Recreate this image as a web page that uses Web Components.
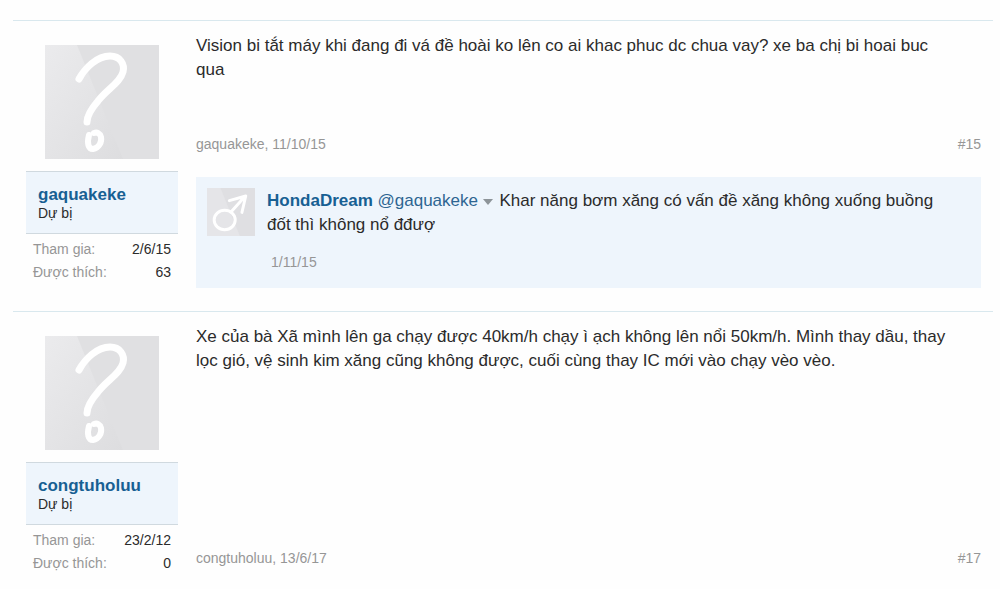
<!DOCTYPE html>
<html lang="vi">
<head>
<meta charset="utf-8">
<meta name="viewport" content="width=device-width, initial-scale=1">
<title>Vision bị tắt máy</title>
<style>
  body { margin: 0; background: #fefefe; color: #2b2b2b; font-family: "Liberation Sans", Arial, sans-serif; font-size: 17px; line-height: 24px; }
</style>
</head>
<body>
<forum-thread>
  <forum-post author="gaquakeke" rank="Dự bị" joined="2/6/15" likes="63" date="11/10/15" number="15">
    Vision bi tắt máy khi đang đi vá đề hoài ko lên co ai khac phuc dc chua vay? xe ba chị bi hoai buc qua
    <post-comment slot="comments" author="HondaDream" mention="gaquakeke" date="1/11/15">Khar năng bơm xăng có vấn đề xăng không xuống buồng đốt thì không nổ đđượ</post-comment>
  </forum-post>
  <forum-post author="congtuholuu" rank="Dự bị" joined="23/2/12" likes="0" date="13/6/17" number="17">
    Xe của bà Xã mình lên ga chạy được 40km/h chạy ì ạch không lên nổi 50km/h. Mình thay dầu, thay lọc gió, vệ sinh kim xăng cũng không được, cuối cùng thay IC mới vào chạy vèo vèo.
  </forum-post>
</forum-thread>
<script>
class ForumThread extends HTMLElement {
  connectedCallback() {
    this.attachShadow({ mode: 'open' }).innerHTML = `
      <style>:host { display: block; padding: 20px 7px 0 13px; }</style>
      <slot></slot>`;
  }
}

class UserAvatar extends HTMLElement {
  connectedCallback() {
    const male = this.getAttribute('kind') === 'male';
    const art = male
      ? `<rect width="114" height="114" fill="#dfdfe2"/>
         <path d="M0 0H32L78 114H0z" fill="#e5e5e8"/>
         <g fill="none" stroke="#fff" stroke-width="7" stroke-linecap="round" stroke-linejoin="round">
           <ellipse cx="42" cy="76" rx="25" ry="23"/><path d="M57 57L90 20M53 30L92 19L83 58"/>
         </g>`
      : `<defs><linearGradient id="g" x1="0" y1="0" x2="1" y2="1"><stop stop-color="#ebebed"/><stop offset="1" stop-color="#dddddf"/></linearGradient></defs>
         <rect width="114" height="114" fill="#e0e0e2"/>
         <path d="M0 0H32L78 114H0z" fill="url(#g)"/>
         <g fill="none" stroke="#fff" stroke-linecap="round" stroke-linejoin="round">
           <path stroke-width="7" d="M34 34C40 23 52 11 65 11C75 11 80 19 78 27C75 38 62 44 53 56C47 63 42 71 42 77"/>
           <path stroke-width="6" d="M44 90C42 98 43 104 48 104C54 103 57 97 56 92C55 88 52 87 49 88"/>
         </g>`;
    this.attachShadow({ mode: 'open' }).innerHTML = `
      <style>:host { display: block; } svg { display: block; width: 100%; height: 100%; }</style>
      <svg viewBox="0 0 114 114" aria-hidden="true">${art}</svg>`;
  }
}

class UserCard extends HTMLElement {
  connectedCallback() {
    const a = n => this.getAttribute(n);
    this.attachShadow({ mode: 'open' }).innerHTML = `
      <style>
        :host { display: block; padding-top: 12px; }
        user-avatar { width: 114px; height: 114px; margin: 0 auto 12px; }
        .name { background: #eef5fc; border: solid #d0d9df; border-width: 1px 0; padding: 12px; }
        a { display: block; color: #176093; font-size: 17px; line-height: 22px; font-weight: bold; text-decoration: none; }
        .rank { font-size: 14px; line-height: 15px; }
        dl { margin: 4px 7px 0; font-size: 14px; line-height: 23px; }
        dl div { display: flex; justify-content: space-between; }
        dt { color: #969696; }
        dd { margin: 0; }
      </style>
      <user-avatar></user-avatar>
      <div class="name"><a href="#">${a('name')}</a><div class="rank">${a('rank')}</div></div>
      <dl>
        <div><dt>Tham gia:</dt><dd>${a('joined')}</dd></div>
        <div><dt>Được thích:</dt><dd>${a('likes')}</dd></div>
      </dl>`;
  }
}

class PostComment extends HTMLElement {
  connectedCallback() {
    const a = n => this.getAttribute(n);
    this.attachShadow({ mode: 'open' }).innerHTML = `
      <style>
        :host { display: flex; gap: 12px; padding: 11px 28px 11px 11px; background: #eef5fc; }
        user-avatar { flex: none; width: 48px; height: 48px; }
        p { margin: 1px 0 15px; }
        a { color: #2d6592; text-decoration: none; }
        .author { color: #176093; font-weight: bold; }
        .arrow { display: inline-block; border: 5px solid transparent; border-top: 6px solid #8d9499; border-bottom: 0; vertical-align: middle; margin-right: 2px; }
        .date { margin: 0 4px 5px; color: #969696; font-size: 14px; line-height: 20px; }
      </style>
      <user-avatar kind="male"></user-avatar>
      <div>
        <p><a class="author" href="#">${a('author')}</a> <a href="#">@${a('mention')}</a> <span class="arrow"></span> <slot></slot></p>
        <div class="date">${a('date')}</div>
      </div>`;
  }
}

class ForumPost extends HTMLElement {
  connectedCallback() {
    const a = n => this.getAttribute(n);
    this.attachShadow({ mode: 'open' }).innerHTML = `
      <style>
        :host { display: grid; grid-template-columns: 152px 1fr; gap: 18px; border-top: 1px solid #d9e8ee; padding: 12px 12px 11px 13px; }
        main { display: flex; flex-direction: column; min-width: 0; padding: 1px 0 8px; }
        .message { min-height: 101px; padding-right: 28px; }
        footer { display: flex; justify-content: space-between; margin-top: auto; font-size: 14px; line-height: 18px; color: #969696; }
        a { color: inherit; text-decoration: none; }
        ::slotted(post-comment) { margin: 24px 0 4px; }
      </style>
      <user-card name="${a('author')}" rank="${a('rank')}" joined="${a('joined')}" likes="${a('likes')}"></user-card>
      <main>
        <div class="message"><slot></slot></div>
        <footer><span><a href="#">${a('author')}</a>, <a href="#">${a('date')}</a></span><a href="#">#${a('number')}</a></footer>
        <slot name="comments"></slot>
      </main>`;
  }
}

customElements.define('user-avatar', UserAvatar);
customElements.define('user-card', UserCard);
customElements.define('post-comment', PostComment);
customElements.define('forum-post', ForumPost);
customElements.define('forum-thread', ForumThread);
</script>
</body>
</html>
